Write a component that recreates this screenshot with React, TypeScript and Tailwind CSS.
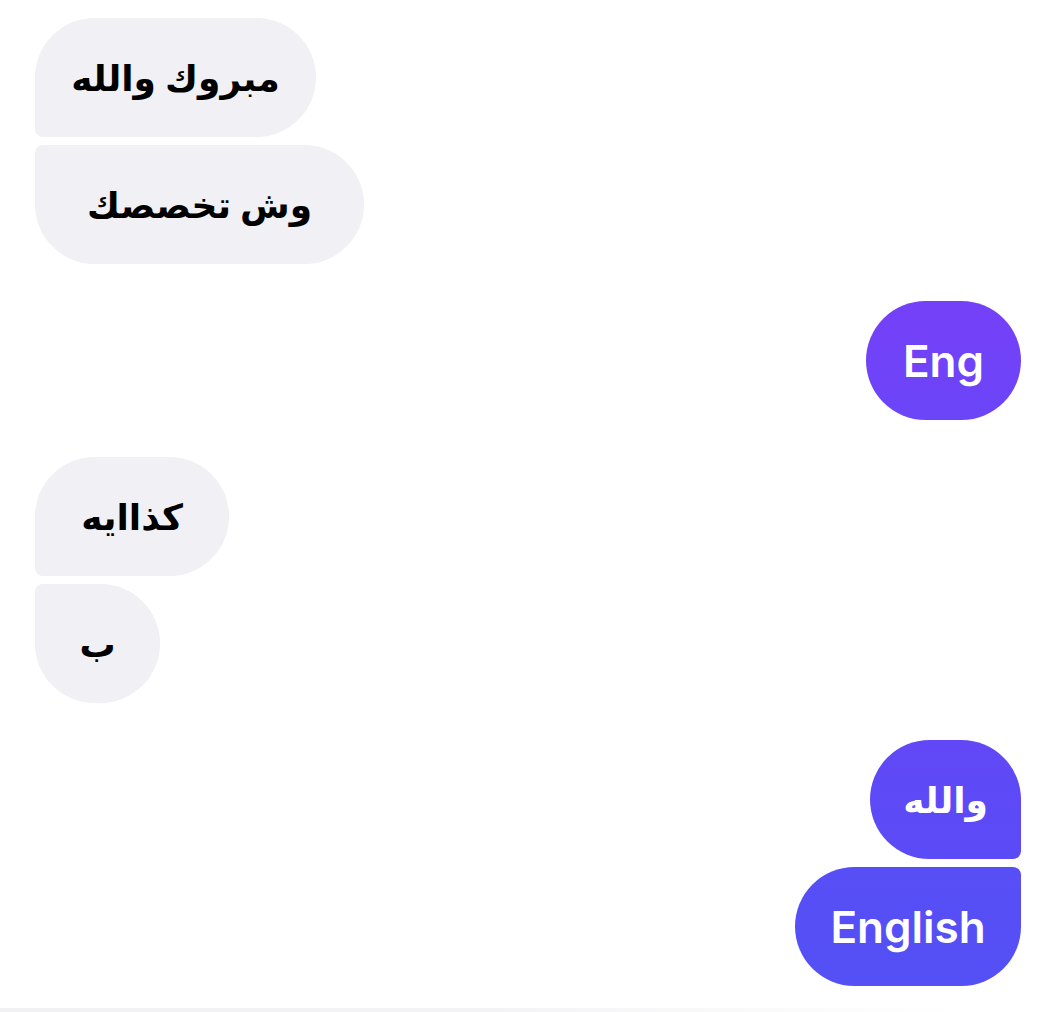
import React from 'react';

type Side = 'in' | 'out';

interface Msg {
  text: string;
  side: Side;
  // which corner on the sender side stays tight
  shape: 'first' | 'last' | 'single';
  width: string;
  arabic?: boolean;
  tone?: string;
}

const groups: Msg[][] = [
  [
    { text: 'مبروك والله', side: 'in', shape: 'first', width: 'w-[281px]', arabic: true },
    { text: 'وش تخصصك', side: 'in', shape: 'last', width: 'w-[329px]', arabic: true },
  ],
  [
    {
      text: 'Eng',
      side: 'out',
      shape: 'single',
      width: 'w-[155px]',
      tone: 'bg-gradient-to-b from-[#7540f8] to-[#6b45f8]',
    },
  ],
  [
    { text: 'كذاايه', side: 'in', shape: 'first', width: 'w-[194px]', arabic: true },
    { text: 'ب', side: 'in', shape: 'last', width: 'w-[125px]', arabic: true },
  ],
  [
    {
      text: 'والله',
      side: 'out',
      shape: 'first',
      width: 'w-[151px]',
      arabic: true,
      tone: 'bg-gradient-to-b from-[#6148f7] to-[#5a4bf6]',
    },
    {
      text: 'English',
      side: 'out',
      shape: 'last',
      width: 'w-[226px]',
      tone: 'bg-gradient-to-b from-[#584ef6] to-[#5350f5]',
    },
  ],
];

function cornerClass(m: Msg) {
  if (m.shape === 'single') return 'rounded-[60px]';
  if (m.side === 'in') {
    return m.shape === 'first'
      ? 'rounded-[60px] rounded-bl-[8px]'
      : 'rounded-[60px] rounded-tl-[8px]';
  }
  return m.shape === 'first'
    ? 'rounded-[60px] rounded-br-[8px]'
    : 'rounded-[60px] rounded-tr-[8px]';
}

function Bubble({ m }: { m: Msg }) {
  const isIn = m.side === 'in';
  return (
    <div className={isIn ? 'flex justify-start' : 'flex justify-end'}>
      <div
        dir="auto"
        className={`${m.width} h-[119px] flex items-center justify-center whitespace-nowrap font-semibold ${
          m.arabic ? 'text-[36px]' : 'text-[44px]'
        } ${cornerClass(m)} ${isIn ? 'bg-[#f0f0f5] text-black' : `${m.tone} text-white`}`}
      >
        {m.text}
      </div>
    </div>
  );
}

export default function App() {
  return (
    <div
      className="w-[1042px] h-[1012px] bg-white overflow-hidden flex flex-col"
      style={{ fontFamily: 'Inter, "DejaVu Sans", sans-serif' }}
    >
      <div className="flex flex-col gap-[37px] pt-[18px] pl-[35px] pr-[21px]">
        {groups.map((g, i) => (
          <div key={i} className="flex flex-col gap-[8px]">
            {g.map((m, j) => (
              <Bubble key={j} m={m} />
            ))}
          </div>
        ))}
      </div>
      <div className="mt-auto h-[4px] w-[970px] bg-gradient-to-r from-[#f1f1f3] via-[#f3f3f5] to-white rounded-tr-full" />
    </div>
  );
}
